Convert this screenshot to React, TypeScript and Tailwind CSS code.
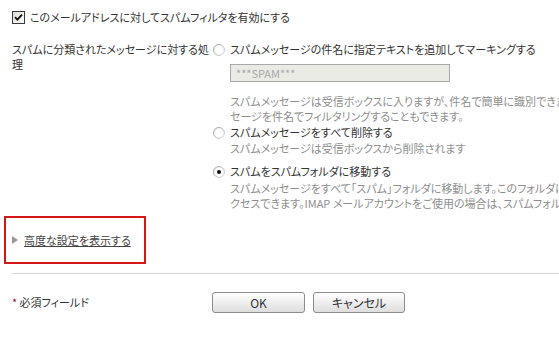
import React from 'react';

const Radio: React.FC<{ checked?: boolean }> = ({ checked }) => (
  <svg width="12" height="12" viewBox="0 0 12 12" className="shrink-0">
    <defs>
      <linearGradient id={checked ? 'rg1' : 'rg0'} x1="0" y1="0" x2="1" y2="1">
        <stop offset="0" stopColor="#9a9a9a" />
        <stop offset="1" stopColor="#e2e2e2" />
      </linearGradient>
    </defs>
    <circle cx="6" cy="6" r="5.5" fill="#f4f4f4" stroke={`url(#${checked ? 'rg1' : 'rg0'})`} strokeWidth="1" />
    <circle cx="6" cy="6" r="4" fill="#fff" />
    {checked && <circle cx="6" cy="6" r="2" fill="#111" />}
  </svg>
);

const Option: React.FC<{ checked?: boolean; label: string; className?: string }> = ({ checked, label, className }) => (
  <div className={`flex items-center h-[15px] ${className ?? ''}`}>
    <div className="w-[17px] flex shrink-0">
      <Radio checked={checked} />
    </div>
    <span className="whitespace-nowrap text-[#333]">{label}</span>
  </div>
);

const Desc: React.FC<{ lines: string[]; className?: string }> = ({ lines, className }) => (
  <div className={`pl-[17px] text-[#8e8e8e] ${className ?? ''}`}>
    {lines.map(l => (
      <div key={l} className="h-[15px] leading-[15px] whitespace-nowrap">{l}</div>
    ))}
  </div>
);

export default function App() {
  return (
    <div
      className="w-[559px] h-[341px] overflow-hidden bg-white text-[11px] leading-[15px] text-[#333] [font-feature-settings:'palt']"
      style={{ fontFamily: '"Noto Sans CJK JP", "Noto Sans", sans-serif' }}
    >
      {/* enable filter */}
      <div className="flex items-center pt-[10px] pl-[12px] h-[25px]">
        <div className="w-[13px] h-[13px] shrink-0 border border-[#3a3a3a] bg-gradient-to-br from-[#dcdcd6] to-white flex items-center justify-center">
          <svg width="9" height="9" viewBox="0 0 9 9">
            <path d="M1 4.2 L3.4 6.6 L8 1.6" fill="none" stroke="#111" strokeWidth="1.9" />
          </svg>
        </div>
        <span className="ml-[5px] whitespace-nowrap">このメールアドレスに対してスパムフィルタを有効にする</span>
      </div>

      {/* spam handling */}
      <div className="flex mt-[17px]">
        <div className="w-[213px] pl-[12px] shrink-0">
          <span className="whitespace-nowrap">スパムに分類されたメッセージに対する処</span>
          <br />理
        </div>
        <div className="flex flex-col min-w-0">
          <Option label="スパムメッセージの件名に指定テキストを追加してマーキングする" />
          <div className="ml-[17px] mt-[7px] w-[220px] h-[18px] border border-[#a9a9a9] bg-[#ebebe6] px-[5px] flex items-center text-[#a8a8a8] text-[11px]">
            ***SPAM***
          </div>
          <Desc
            className="mt-[12px]"
            lines={[
              'スパムメッセージは受信ボックスに入りますが、件名で簡単に識別できます。スパムメッ',
              'セージを件名でフィルタリングすることもできます。',
            ]}
          />
          <Option label="スパムメッセージをすべて削除する" className="mt-[1px]" />
          <Desc className="mt-[1px]" lines={['スパムメッセージは受信ボックスから削除されます']} />
          <Option checked label="スパムをスパムフォルダに移動する" className="mt-[8px]" />
          <Desc
            className="mt-[2px]"
            lines={[
              'スパムメッセージをすべて「スパム」フォルダに移動します。このフォルダにはウェブメールからア',
              'クセスできます。IMAP メールアカウントをご使用の場合は、スパムフォルダはメールクライアントにも表示されます。',
            ]}
          />
        </div>
      </div>

      {/* advanced settings */}
      <div className="ml-[4px] mt-[5px] w-[142px] h-[48px] border-2 border-[#d7141a] flex items-center pl-[6px]">
        <svg width="6" height="8" viewBox="0 0 6 8" className="mr-[6px]">
          <path d="M0 0 L6 4 L0 8 Z" fill="#9a9a9a" />
        </svg>
        <a href="#" className="underline text-[#444] whitespace-nowrap">高度な設定を表示する</a>
      </div>

      <div className="ml-[12px] mt-[9px] border-t border-[#d4d4d4]" />

      {/* footer */}
      <div className="flex items-center mt-[18px]">
        <div className="w-[212px] pl-[12px] shrink-0 whitespace-nowrap">
          <span className="text-[#a5001e]">*</span> 必須フィールド
        </div>
        <button className="w-[93px] h-[21px] rounded-[3px] border border-[#8c8c8c] bg-gradient-to-b from-white to-[#dedede] text-[#333] text-[12px]">
          OK
        </button>
        <button className="ml-[8px] w-[92px] h-[21px] rounded-[3px] border border-[#8c8c8c] bg-gradient-to-b from-white to-[#dedede] text-[#333] text-[12px]">
          キャンセル
        </button>
      </div>
    </div>
  );
}
